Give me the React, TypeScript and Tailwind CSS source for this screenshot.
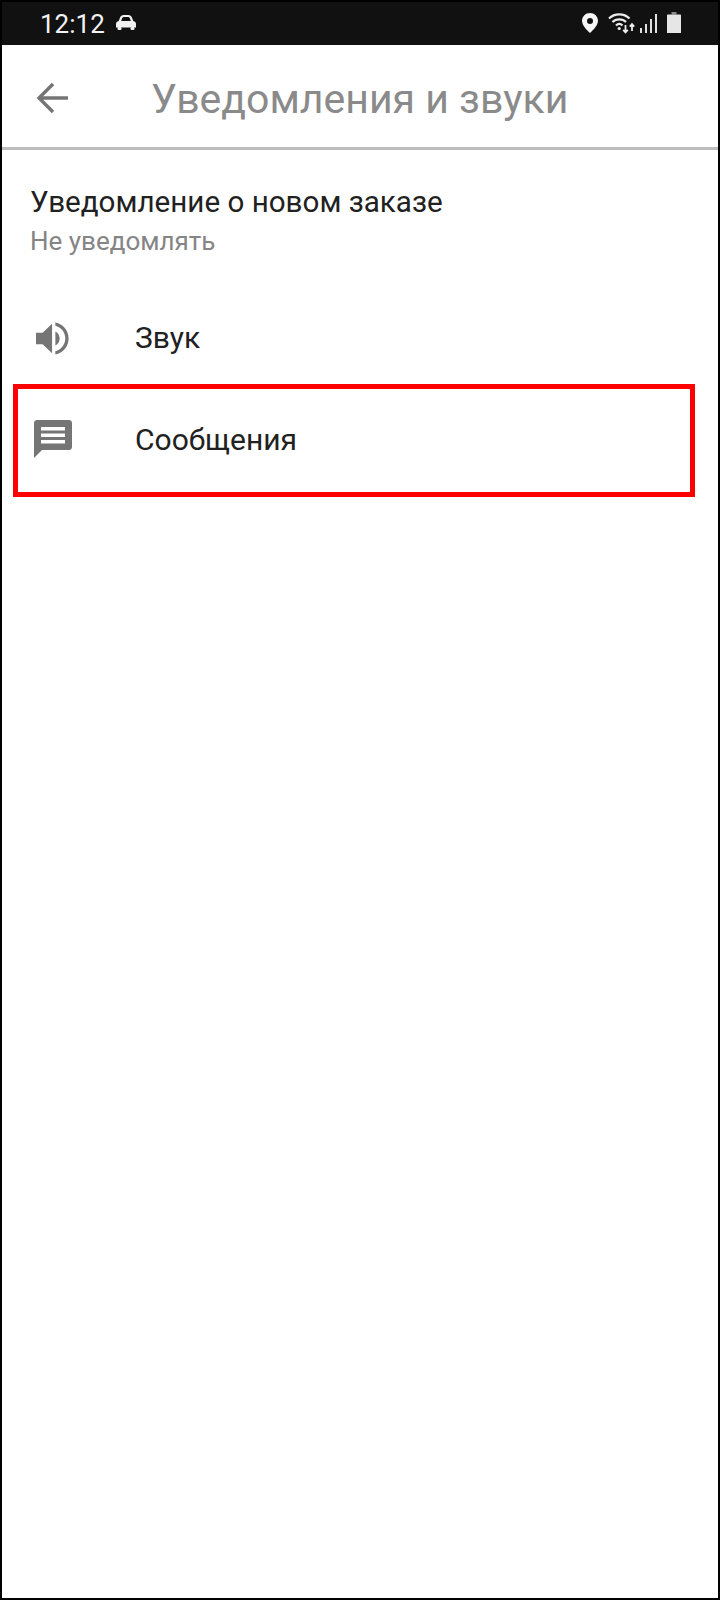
const App = () => {
  return (
    <div className="h-[1600px] w-[720px] border-2 border-black bg-white flex flex-col font-['Roboto',sans-serif]">
      {/* Status bar */}
      <div className="h-[43px] bg-[#111111] flex items-center pl-[38px] pr-[37px] text-[#f2f2f2] shrink-0">
        <span className="text-[26px] leading-none">12:12</span>
        <svg className="ml-[11px] mb-[2px]" width="20" height="15" viewBox="0 0 20 15" fill="#f2f2f2">
          <path d="M3.500 4C4.200 1.500 5.500 0 8 0h4c2.500 0 3.800 1.500 4.500 4l.8 2c1.700.4 2.700 1.500 2.700 3v3.500H0V9c0-1.500 1-2.600 2.700-3zM5.200 6h9.600l-.7-2.300C13.700 2.500 13 2 12 2H8c-1 0-1.700.5-2.100 1.700z" fillRule="evenodd" />
          <rect x="1.500" y="12" width="4" height="3" rx="1.200" />
          <rect x="14.500" y="12" width="4" height="3" rx="1.200" />
        </svg>
        <div className="ml-auto mb-[2px] flex items-center">
          <svg width="16" height="20" viewBox="0 0 16 20" fill="#f6f6f6">
            <path fillRule="evenodd" d="M8 0c4.400 0 8 3.400 8 7.800C16 12 11.500 17 8 20 4.500 17 0 12 0 7.800 0 3.400 3.600 0 8 0zm0 5a3 3 0 1 0 0 6 3 3 0 0 0 0-6z" />
          </svg>
          <svg className="ml-[10px]" width="28" height="22" viewBox="0 0 28 22" fill="none" stroke="#ececec">
            <path d="M1 6.500C6.500 1 16 1 21.500 6.500" strokeWidth="2.200" />
            <path d="M4.500 10c3.500-3.500 10-3.500 13.500 0" strokeWidth="2.200" />
            <path d="M8 13.500c2-2 4.500-2 6.500 0" strokeWidth="2.200" />
            <circle cx="11.200" cy="16.500" r="1.600" fill="#ececec" stroke="none" />
            <path d="M17.500 13v7M15.200 17.800l2.300 2.500 2.300-2.500" strokeWidth="1.800" />
            <path d="M24 19v-6.500M21.800 14.700 24 12.200l2.200 2.500" strokeWidth="1.800" />
          </svg>
          <svg className="ml-[4px]" width="18" height="22" viewBox="0 0 18 22" fill="#e0e0e0">
            <rect x="0" y="16" width="2" height="5" />
            <rect x="5" y="12" width="2" height="9" />
            <rect x="10" y="7" width="2" height="14" />
            <rect x="15" y="2" width="2" height="19" />
          </svg>
          <svg className="ml-[9px]" width="14" height="21" viewBox="0 0 14 21">
            <path d="M4.500 0h5v2.500h-5z" fill="#8a8a8a" />
            <path d="M0 3.500C0 2.900.4 2.500 1 2.500h12c.6 0 1 .4 1 1V21H0z" fill="#e6e6e6" />
          </svg>
        </div>
      </div>

      {/* Header */}
      <div className="h-[105px] border-b-[3px] border-[#bdbdbd] flex items-center shrink-0">
        <svg className="ml-[33px] mt-[4px]" width="36" height="36" viewBox="0 0 36 36" fill="none" stroke="#757575" strokeWidth="3.400">
          <path d="M33 18H6M18 4 4 18l14 14" />
        </svg>
        <div className="ml-[80px] mt-[6px] text-[41px] leading-none text-[#8a8a8a]">Уведомления и звуки</div>
      </div>

      {/* Order notification */}
      <div className="pl-[28px] pt-[36px]">
        <div className="text-[29.6px] leading-[32px] text-[#212121]">Уведомление о новом заказе</div>
        <div className="mt-[9px] text-[26px] leading-[28px] text-[#858585]">Не уведомлять</div>
      </div>

      {/* Sound row */}
      <div className="mt-[63px] ml-[34px] flex items-center h-[40px]">
        <svg width="34" height="33" viewBox="0 0 36 34" fill="#757575">
          <path d="M0 11h7L17 1.500v31L7 23H0z" />
          <path d="M20.500 9.500c3 1.500 4.500 4.300 4.500 7.500s-1.500 6-4.500 7.500z" />
          <path d="M20.500 0c8 1.500 14 8.500 14 17s-6 15.500-14 17v-3.600c6-1.400 10.500-7 10.500-13.400S26.500 5 20.500 3.600z" />
        </svg>
        <span className="ml-[65px] text-[30px] leading-none text-[#212121]">Звук</span>
      </div>

      {/* Highlighted messages row */}
      <div className="mt-[26px] ml-[11px] w-[682px] h-[113px] border-[5px] border-[#ff0000] flex items-start pl-[16px] pt-[31px]">
        <svg width="38" height="38" viewBox="0 0 38 38" fill="#757575">
          <path d="M3 0h32c1.700 0 3 1.300 3 3v24c0 1.700-1.300 3-3 3H8l-8 8V3c0-1.700 1.300-3 3-3zM7 7v3.500h24V7zm0 6.500V17h24v-3.500zM7 20v3.500h24V20z" fillRule="evenodd" />
        </svg>
        <span className="ml-[63px] mt-[4px] text-[30px] leading-[32px] text-[#212121]">Сообщения</span>
      </div>
    </div>
  );
};

export default App;
